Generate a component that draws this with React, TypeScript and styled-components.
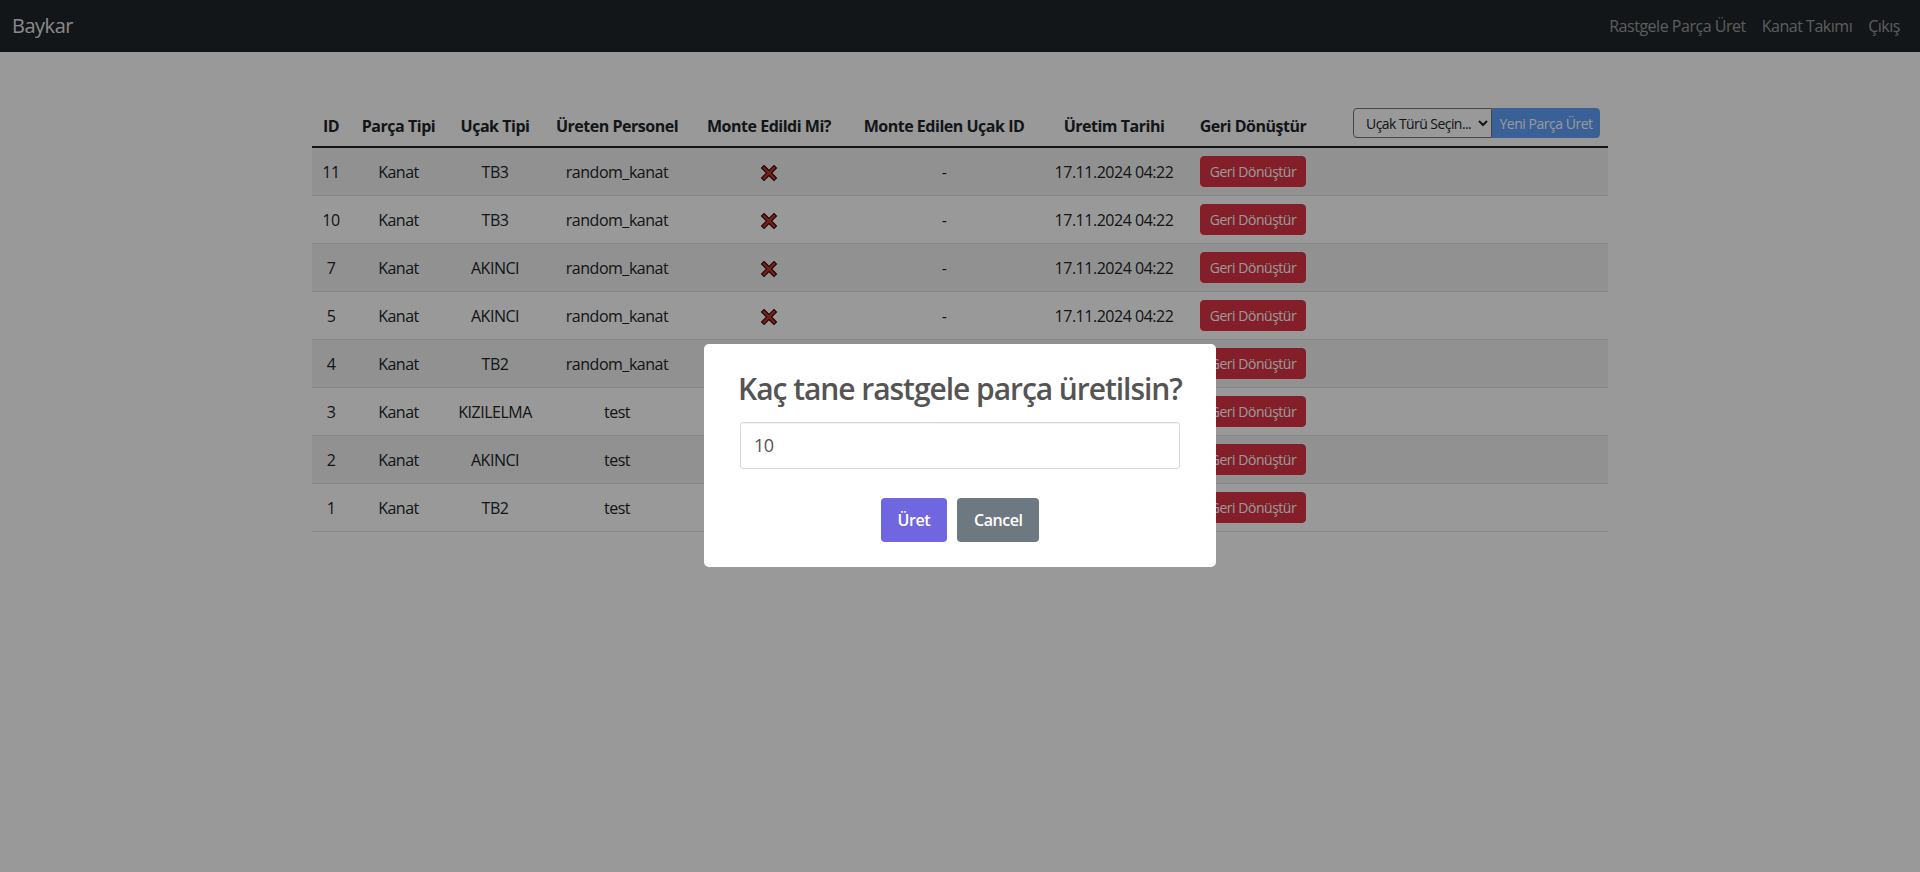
import React from "react";
import styled, { createGlobalStyle } from "styled-components";

const GlobalStyle = createGlobalStyle`
  * { box-sizing: border-box; }
  body {
    margin: 0;
    font-family: "Open Sans", "Noto Sans", sans-serif;
    font-size: 16px;
    line-height: 1.5;
    letter-spacing: -0.03em;
    color: #212529;
    background: #fff;
  }
  button, input, select {
    font-family: inherit;
    letter-spacing: inherit;
  }
`;

const Navbar = styled.nav`
  height: 52px;
  background-color: #212529;
  display: flex;
  align-items: center;
  justify-content: space-between;
  padding: 0 12px;
`;

const Brand = styled.a`
  font-size: 20px;
  color: rgba(255, 255, 255, 0.9);
  text-decoration: none;
`;

const NavLinks = styled.div`
  display: flex;
  align-items: center;
`;

const NavLink = styled.a`
  padding: 0 8px;
  color: rgba(255, 255, 255, 0.55);
  text-decoration: none;
`;

const Container = styled.div`
  width: 1296px;
  margin: 48px auto 0;
`;

const Table = styled.table`
  width: 100%;
  border-collapse: collapse;
  table-layout: fixed;
  text-align: center;
`;

const Col = styled.col<{ $w: number }>`
  width: ${(p) => p.$w}px;
`;

const Th = styled.th`
  padding: 8px;
  vertical-align: bottom;
  font-weight: 700;
  white-space: nowrap;
  border-bottom: 2px solid #212529;
`;

const ActionTh = styled(Th)`
  vertical-align: middle;
`;

const InputGroup = styled.div`
  display: flex;
  justify-content: flex-end;
`;

const Select = styled.select`
  height: 30px;
  width: 139px;
  font-size: 14px;
  letter-spacing: -0.04em;
  color: #212529;
  background: #fff;
  border: 1px solid #767676;
  border-radius: 4px 0 0 4px;
  padding: 0 0 0 8px;
`;

const GroupButton = styled.button`
  height: 30px;
  width: 108px;
  padding: 0;
  font-size: 14px;
  color: #fff;
  background-color: #0d6efd;
  border: 1px solid #0d6efd;
  border-radius: 0 4px 4px 0;
  opacity: 0.65;
`;

const Tr = styled.tr<{ $striped: boolean }>`
  background-color: ${(p) => (p.$striped ? "#f2f2f2" : "#fff")};
`;

const Td = styled.td`
  padding: 8px;
  vertical-align: middle;
  white-space: nowrap;
  border-bottom: 1px solid #dee2e6;
`;

const DangerButton = styled.button`
  height: 31px;
  width: 106px;
  padding: 0;
  font-size: 14px;
  color: #fff;
  background-color: #dc3545;
  border: 1px solid #dc3545;
  border-radius: 4px;
`;

const Backdrop = styled.div`
  position: fixed;
  inset: 0;
  background: rgba(0, 0, 0, 0.4);
  display: flex;
  align-items: center;
  justify-content: center;
  padding-top: 38px;
`;

const Popup = styled.div`
  width: 512px;
  background: #fff;
  border-radius: 5px;
  padding: 0 0 20px;
  display: flex;
  flex-direction: column;
`;

const Title = styled.h2`
  margin: 0;
  padding: 24px 16px 0;
  font-size: 30px;
  font-weight: 600;
  line-height: 41px;
  letter-spacing: -0.035em;
  color: #545454;
  text-align: center;
`;

const Input = styled.input`
  height: 47px;
  margin: 13px 36px 3px;
  padding: 0 13px;
  font-size: 18px;
  color: #545454;
  border: 1px solid #d9d9d9;
  border-radius: 3px;
  box-shadow: inset 0 1px 1px rgba(0, 0, 0, 0.06);
  outline: none;
`;

const Actions = styled.div`
  display: flex;
  justify-content: center;
  margin-top: 21px;
`;

const PopupButton = styled.button<{ $variant: "confirm" | "cancel" }>`
  margin: 5px;
  padding: 11px 17px;
  font-size: 16px;
  line-height: 22px;
  font-weight: 600;
  color: #fff;
  border: 0;
  border-radius: 4px;
  background-color: ${(p) => (p.$variant === "confirm" ? "#7066e0" : "#6e7881")};
`;

const CrossIcon = () => (
  <svg width="18" height="18" viewBox="0 0 18 18" style={{ verticalAlign: "middle" }}>
    <g strokeLinecap="square">
      <path d="M4 4 L14 14 M14 4 L4 14" stroke="#2b0b0b" strokeWidth="4.6" />
      <path d="M4 4 L14 14 M14 4 L4 14" stroke="#d3322a" strokeWidth="2.4" />
    </g>
  </svg>
);

const columns = [38, 97, 96, 148, 156, 194, 146, 132, 289];

const parts = [
  { id: 11, plane: "TB3", user: "random_kanat" },
  { id: 10, plane: "TB3", user: "random_kanat" },
  { id: 7, plane: "AKINCI", user: "random_kanat" },
  { id: 5, plane: "AKINCI", user: "random_kanat" },
  { id: 4, plane: "TB2", user: "random_kanat" },
  { id: 3, plane: "KIZILELMA", user: "test" },
  { id: 2, plane: "AKINCI", user: "test" },
  { id: 1, plane: "TB2", user: "test" },
];

function App() {
  return (
    <>
      <GlobalStyle />
      <Navbar>
        <Brand href="#">Baykar</Brand>
        <NavLinks>
          <NavLink href="#">Rastgele Parça Üret</NavLink>
          <NavLink href="#">Kanat Takımı</NavLink>
          <NavLink href="#">Çıkış</NavLink>
        </NavLinks>
      </Navbar>
      <Container>
        <Table>
          <colgroup>
            {columns.map((w, i) => (
              <Col key={i} $w={w} />
            ))}
          </colgroup>
          <thead>
            <tr>
              <Th>ID</Th>
              <Th>Parça Tipi</Th>
              <Th>Uçak Tipi</Th>
              <Th>Üreten Personel</Th>
              <Th>Monte Edildi Mi?</Th>
              <Th>Monte Edilen Uçak ID</Th>
              <Th>Üretim Tarihi</Th>
              <Th>Geri Dönüştür</Th>
              <ActionTh>
                <InputGroup>
                  <Select defaultValue="">
                    <option value="">Uçak Türü Seçin...</option>
                    <option value="TB2">TB2</option>
                    <option value="TB3">TB3</option>
                    <option value="AKINCI">AKINCI</option>
                    <option value="KIZILELMA">KIZILELMA</option>
                  </Select>
                  <GroupButton disabled>Yeni Parça Üret</GroupButton>
                </InputGroup>
              </ActionTh>
            </tr>
          </thead>
          <tbody>
            {parts.map((p, i) => (
              <Tr key={p.id} $striped={i % 2 === 0}>
                <Td>{p.id}</Td>
                <Td>Kanat</Td>
                <Td>{p.plane}</Td>
                <Td>{p.user}</Td>
                <Td>
                  <CrossIcon />
                </Td>
                <Td>-</Td>
                <Td>17.11.2024 04:22</Td>
                <Td>
                  <DangerButton>Geri Dönüştür</DangerButton>
                </Td>
                <Td />
              </Tr>
            ))}
          </tbody>
        </Table>
      </Container>
      <Backdrop>
        <Popup>
          <Title>Kaç tane rastgele parça üretilsin?</Title>
          <Input type="number" defaultValue="10" />
          <Actions>
            <PopupButton $variant="confirm">Üret</PopupButton>
            <PopupButton $variant="cancel">Cancel</PopupButton>
          </Actions>
        </Popup>
      </Backdrop>
    </>
  );
}

export default App;
